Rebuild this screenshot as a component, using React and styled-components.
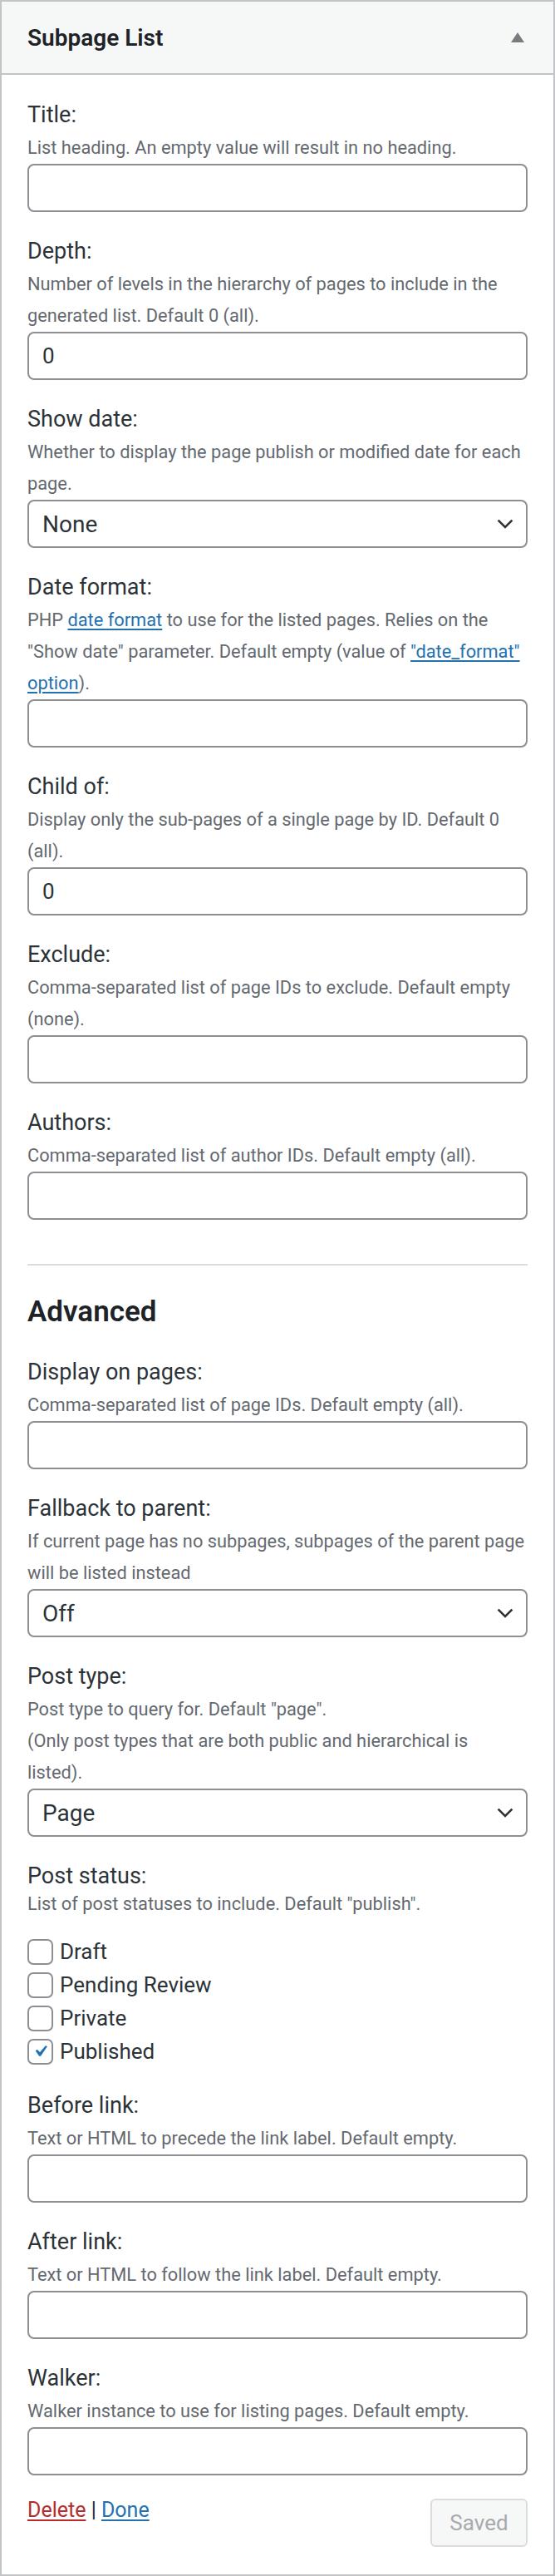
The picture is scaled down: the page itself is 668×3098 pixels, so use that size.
import React from 'react';
import styled, { createGlobalStyle } from 'styled-components';

const Global = createGlobalStyle`
  html, body { margin: 0; padding: 0; background: #fff; }
  body { font-family: Roboto, "Noto Sans", sans-serif; color: #2c3338; }
  * { box-sizing: border-box; }
`;

const Widget = styled.div`
  width: 668px;
  height: 3098px;
  border: 2px solid #c3c4c7;
  background: #fff;
  display: flex;
  flex-direction: column;
`;

const Header = styled.div`
  height: 88px;
  flex: none;
  background: #f6f7f7;
  border-bottom: 2px solid #c3c4c7;
  display: flex;
  align-items: center;
  justify-content: space-between;
  padding: 0 35px 0 31px;
`;

const HeaderTitle = styled.h3`
  margin: 0;
  font-size: 28px;
  font-weight: 600;
  color: #1d2327;
`;

const Body = styled.div`
  padding: 0 31px;
  display: flex;
  flex-direction: column;
`;

const Field = styled.div`
  display: flex;
  flex-direction: column;
  margin-top: ${(p) => p.$top ?? 27}px;
`;

const Label = styled.label`
  font-size: 27px;
  line-height: 41px;
  color: #2c3338;
`;

const Desc = styled.div`
  font-size: 21.8px;
  line-height: 38px;
  color: #646970;
  margin-top: ${(p) => p.$shift ?? 0}px;
`;

const DescLine = styled.span`
  display: block;
  white-space: nowrap;
`;

const A = styled.a`
  color: ${(p) => (p.$danger ? '#b32d2e' : '#2271b1')};
  text-decoration: underline;
  text-decoration-thickness: 2px;
  text-underline-offset: 3px;
`;

const TextInput = styled.input`
  display: block;
  width: 100%;
  height: 58px;
  border: 2px solid #8c8f94;
  border-radius: 8px;
  padding: 0 16px;
  font-family: inherit;
  font-size: 26px;
  color: #2c3338;
  background: #fff;
  outline: none;
`;

const SelectWrap = styled.div`
  position: relative;
  height: 58px;
`;

const Select = styled.select`
  appearance: none;
  display: block;
  width: 100%;
  height: 58px;
  border: 2px solid #8c8f94;
  border-radius: 8px;
  padding: 0 50px 0 16px;
  font-family: inherit;
  font-size: 28px;
  color: #2c3338;
  background: #fff;
  outline: none;
`;

const Chevron = styled.svg`
  position: absolute;
  right: 17px;
  top: 50%;
  transform: translateY(-50%);
  pointer-events: none;
`;

const Separator = styled.hr`
  border: 0;
  border-top: 2px solid #dcdcde;
  margin: 53px 0 0;
`;

const SectionTitle = styled.h3`
  margin: 34px 0 0;
  font-size: 35px;
  line-height: 44px;
  font-weight: 600;
  color: #1d2327;
`;

const CheckList = styled.div`
  display: flex;
  flex-direction: column;
  margin-top: 18px;
`;

const CheckRow = styled.label`
  display: flex;
  align-items: center;
  gap: 8px;
  height: 40px;
  font-size: 26px;
  color: #2c3338;
`;

const Box = styled.span`
  width: 31px;
  height: 31px;
  flex: none;
  border: 2px solid #8c8f94;
  border-radius: 7px;
  display: flex;
  align-items: center;
  justify-content: center;
  overflow: visible;
  background: #fff;
`;

const Footer = styled.div`
  margin-top: 23px;
  display: flex;
  justify-content: space-between;
  align-items: flex-start;
`;

const Links = styled.div`
  font-size: 25px;
  line-height: 38px;
  color: #1d2327;
`;

const SavedButton = styled.button`
  margin-top: 5px;
  height: 58px;
  width: 117px;
  border: 2px solid #dcdcde;
  border-radius: 6px;
  background: #f6f7f7;
  color: #a7aaad;
  font-family: inherit;
  font-size: 26px;
  padding: 0;
`;

function ChevronIcon() {
  return (
    <Chevron width="20" height="12" viewBox="0 0 20 12">
      <path d="M1.6 1.6 L10 10 L18.4 1.6" fill="none" stroke="#2c3338" strokeWidth="2.6" />
    </Chevron>
  );
}

function SelectBox({ value }) {
  return (
    <SelectWrap>
      <Select value={value} onChange={() => {}}>
        <option value={value}>{value}</option>
      </Select>
      <ChevronIcon />
    </SelectWrap>
  );
}

function Check({ label, checked }) {
  return (
    <CheckRow>
      <Box>
        {checked && (
          <svg width="38" height="38" viewBox="0 0 20 20">
            <path d="M14.83 4.89l1.34.94-5.81 8.38H9.02L5.78 9.67l1.34-1.25 2.57 2.4z" fill="#2271b1" />
          </svg>
        )}
      </Box>
      {label}
    </CheckRow>
  );
}

const basic = [
  { label: 'Title:', desc: ['List heading. An empty value will result in no heading.'], top: 28 },
  {
    label: 'Depth:',
    desc: ['Number of levels in the hierarchy of pages to include in the', 'generated list. Default 0 (all).'],
    value: '0',
  },
  {
    label: 'Show date:',
    desc: ['Whether to display the page publish or modified date for each', 'page.'],
    select: 'None',
  },
  {
    label: 'Date format:',
    desc: [
      <>PHP <A href="#">date format</A> to use for the listed pages. Relies on the</>,
      <>"Show date" parameter. Default empty (value of <A href="#">"date_format"</A></>,
      <><A href="#">option</A>).</>,
    ],
  },
  {
    label: 'Child of:',
    desc: ['Display only the sub-pages of a single page by ID. Default 0', '(all).'],
    value: '0',
  },
  {
    label: 'Exclude:',
    desc: ['Comma-separated list of page IDs to exclude. Default empty', '(none).'],
  },
  { label: 'Authors:', desc: ['Comma-separated list of author IDs. Default empty (all).'] },
];

const advanced = [
  { label: 'Display on pages:', desc: ['Comma-separated list of page IDs. Default empty (all).'], top: 30 },
  {
    label: 'Fallback to parent:',
    desc: ['If current page has no subpages, subpages of the parent page', 'will be listed instead'],
    select: 'Off',
  },
  {
    label: 'Post type:',
    desc: [
      'Post type to query for. Default "page".',
      '(Only post types that are both public and hierarchical is',
      'listed).',
    ],
    select: 'Page',
  },
];

const after = [
  { label: 'Before link:', desc: ['Text or HTML to precede the link label. Default empty.'], top: 25 },
  { label: 'After link:', desc: ['Text or HTML to follow the link label. Default empty.'] },
  { label: 'Walker:', desc: ['Walker instance to use for listing pages. Default empty.'] },
];

function FieldBlock({ f }) {
  return (
    <Field $top={f.top}>
      <Label>{f.label}</Label>
      <Desc>
        {f.desc.map((line, i) => (
          <DescLine key={i}>{line}</DescLine>
        ))}
      </Desc>
      {f.select ? (
        <SelectBox value={f.select} />
      ) : (
        <TextInput type="text" value={f.value ?? ''} readOnly />
      )}
    </Field>
  );
}

export default function App() {
  return (
    <>
      <Global />
      <Widget>
        <Header>
          <HeaderTitle>Subpage List</HeaderTitle>
          <svg width="16" height="12" viewBox="0 0 16 12">
            <path d="M8 0 L16 12 L0 12 Z" fill="#787c82" />
          </svg>
        </Header>
        <Body>
          {basic.map((f) => (
            <FieldBlock key={f.label} f={f} />
          ))}
          <Separator />
          <SectionTitle>Advanced</SectionTitle>
          {advanced.map((f) => (
            <FieldBlock key={f.label} f={f} />
          ))}
          <Field>
            <Label>Post status:</Label>
            <Desc $shift={-6}>
              <DescLine>List of post statuses to include. Default "publish".</DescLine>
            </Desc>
            <CheckList>
              <Check label="Draft" />
              <Check label="Pending Review" />
              <Check label="Private" />
              <Check label="Published" checked />
            </CheckList>
          </Field>
          {after.map((f) => (
            <FieldBlock key={f.label} f={f} />
          ))}
          <Footer>
            <Links>
              <A href="#" $danger>Delete</A> | <A href="#">Done</A>
            </Links>
            <SavedButton type="button">Saved</SavedButton>
          </Footer>
        </Body>
      </Widget>
    </>
  );
}
